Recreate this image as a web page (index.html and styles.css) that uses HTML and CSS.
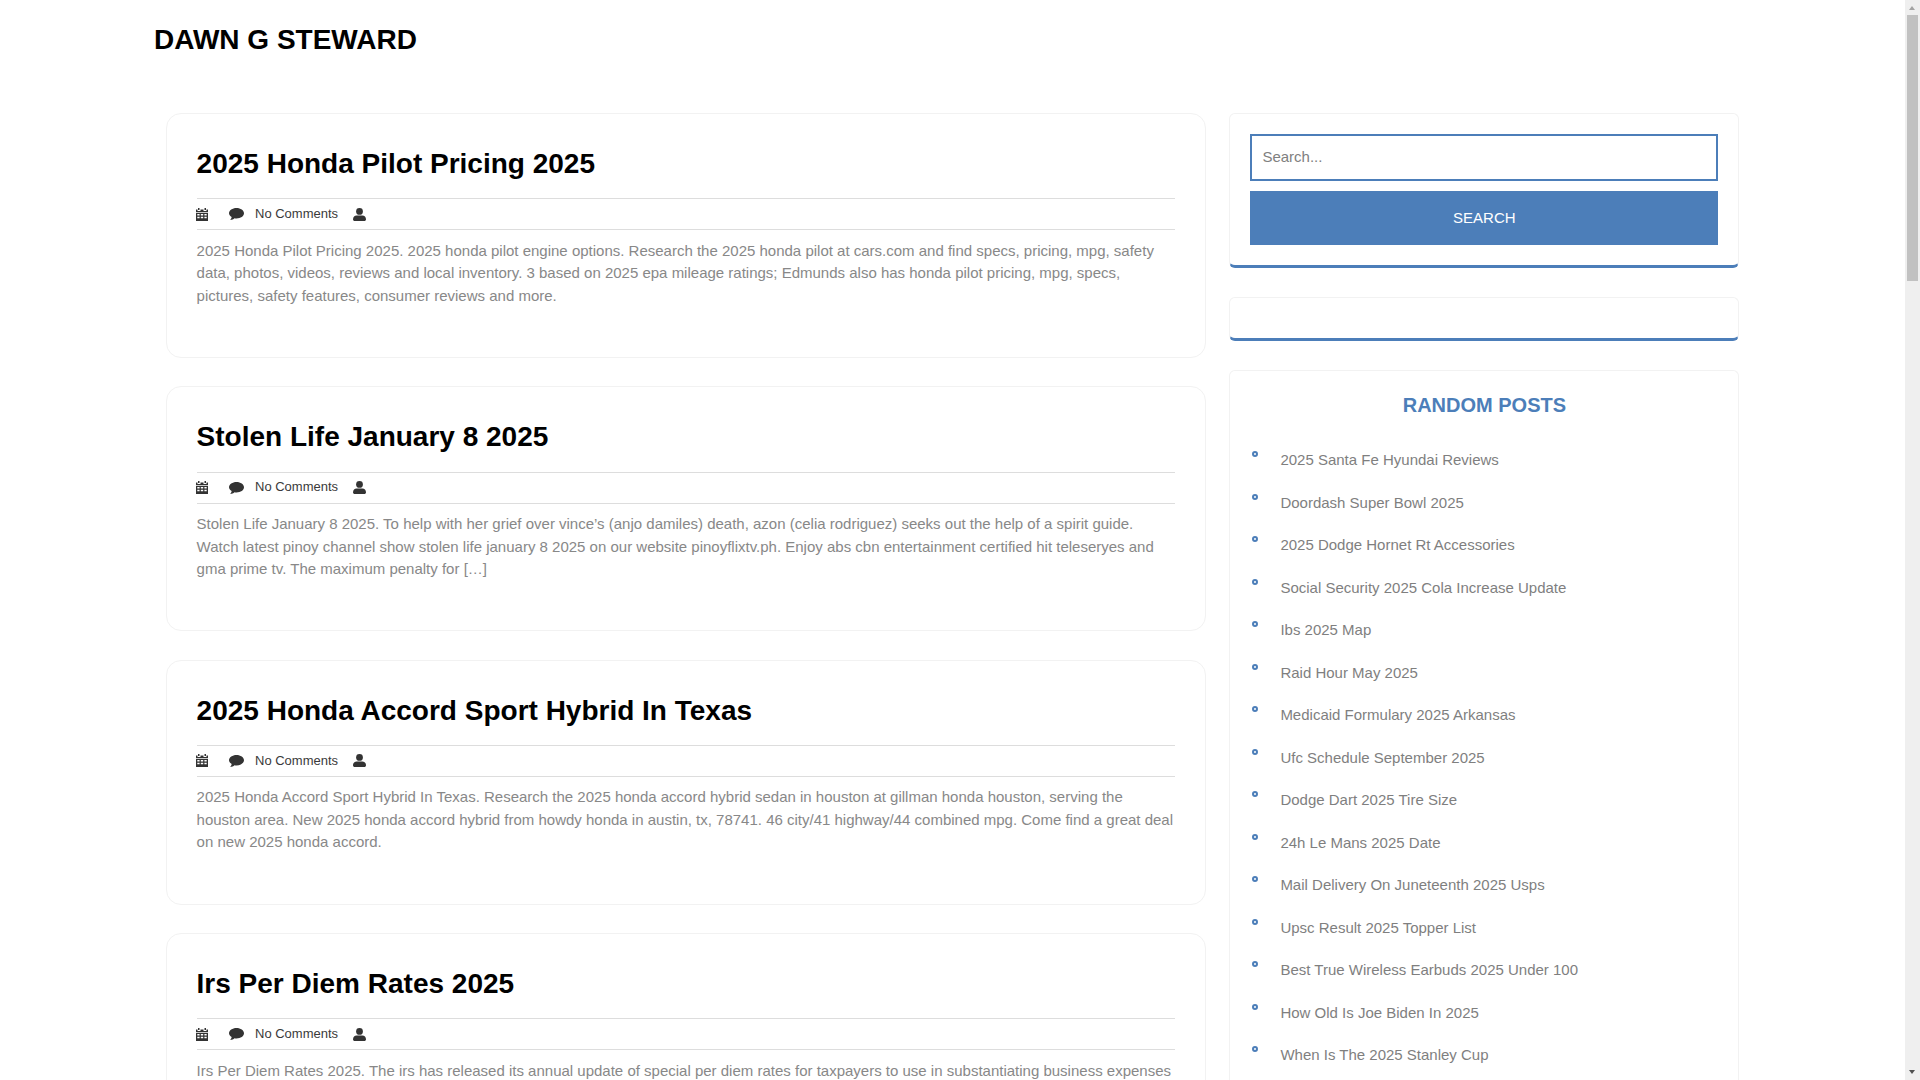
FILE: index.html
```html
<!DOCTYPE html>
<html lang="en">

<head>
    <meta charset="UTF-8">
    <meta name="viewport" content="width=device-width, initial-scale=1.0">
    <title>Dawn G Steward</title>
    <link rel="stylesheet" href="styles.css">
</head>

<body>
    <svg class="icon-defs" width="0" height="0">
        <symbol id="i-cal" viewBox="0 0 12 13">
            <path d="M2 0h1.500v2H2zM8.500 0H10v2H8.500zM0 1.500h1.500v1.500h3V1.500h3v1.500h3V1.500H12V4H0zM0 4.800h12V13H0zM1.300 6v1.500h2.300V6zm3.500 0v1.500h2.400V6zm3.600 0v1.500h2.300V6zM1.300 8.700v1.600h2.300V8.700zm3.500 0v1.600h2.400V8.700zm3.600 0v1.600h2.300V8.700z" fill-rule="evenodd"/>
        </symbol>
        <symbol id="i-comment" viewBox="0 0 15 12">
            <path d="M7.500 0C11.600 0 15 2.300 15 5.200s-3.400 5.200-7.500 5.200c-.7 0-1.400-.1-2-.2C4.500 11.100 3 11.800 1.200 12c.8-.9 1.400-1.900 1.500-3C1 8 0 6.700 0 5.200 0 2.300 3.400 0 7.500 0z"/>
        </symbol>
        <symbol id="i-user" viewBox="0 0 13 13">
            <circle cx="6.500" cy="3.400" r="3.400"/>
            <path d="M0 11.200C0 9 1.600 7.500 3.600 7.500h5.800C11.400 7.500 13 9 13 11.200c0 1.100-.7 1.800-1.800 1.800H1.800C.7 13 0 12.300 0 11.200z"/>
        </symbol>
    </svg>

    <header class="site-header">
        <a class="site-title" href="#">DAWN G STEWARD</a>
    </header>

    <div class="wrapper">
        <main class="posts">
            <article class="post">
                <h2 class="post-title">2025 Honda Pilot Pricing 2025</h2>
                <div class="post-meta">
                    <svg class="ico ico-cal"><use href="#i-cal"/></svg>
                    <svg class="ico ico-comment"><use href="#i-comment"/></svg>
                    <span>No Comments</span>
                    <svg class="ico ico-user"><use href="#i-user"/></svg>
                </div>
                <p class="post-text">2025 Honda Pilot Pricing 2025. 2025 honda pilot engine options. Research the 2025 honda pilot at cars.com and find specs, pricing, mpg, safety data, photos, videos, reviews and local inventory. 3 based on 2025 epa mileage ratings; Edmunds also has honda pilot pricing, mpg, specs, pictures, safety features, consumer reviews and more.</p>
            </article>

            <article class="post">
                <h2 class="post-title">Stolen Life January 8 2025</h2>
                <div class="post-meta">
                    <svg class="ico ico-cal"><use href="#i-cal"/></svg>
                    <svg class="ico ico-comment"><use href="#i-comment"/></svg>
                    <span>No Comments</span>
                    <svg class="ico ico-user"><use href="#i-user"/></svg>
                </div>
                <p class="post-text">Stolen Life January 8 2025. To help with her grief over vince’s (anjo damiles) death, azon (celia rodriguez) seeks out the help of a spirit guide. Watch latest pinoy channel show stolen life january 8 2025 on our website pinoyflixtv.ph. Enjoy abs cbn entertainment certified hit teleseryes and gma prime tv. The maximum penalty for […]</p>
            </article>

            <article class="post">
                <h2 class="post-title">2025 Honda Accord Sport Hybrid In Texas</h2>
                <div class="post-meta">
                    <svg class="ico ico-cal"><use href="#i-cal"/></svg>
                    <svg class="ico ico-comment"><use href="#i-comment"/></svg>
                    <span>No Comments</span>
                    <svg class="ico ico-user"><use href="#i-user"/></svg>
                </div>
                <p class="post-text">2025 Honda Accord Sport Hybrid In Texas. Research the 2025 honda accord hybrid sedan in houston at gillman honda houston, serving the houston area. New 2025 honda accord hybrid from howdy honda in austin, tx, 78741. 46 city/41 highway/44 combined mpg. Come find a great deal on new 2025 honda accord.</p>
            </article>

            <article class="post">
                <h2 class="post-title">Irs Per Diem Rates 2025</h2>
                <div class="post-meta">
                    <svg class="ico ico-cal"><use href="#i-cal"/></svg>
                    <svg class="ico ico-comment"><use href="#i-comment"/></svg>
                    <span>No Comments</span>
                    <svg class="ico ico-user"><use href="#i-user"/></svg>
                </div>
                <p class="post-text">Irs Per Diem Rates 2025. The irs has released its annual update of special per diem rates for taxpayers to use in substantiating business expenses […]</p>
            </article>
        </main>

        <aside class="sidebar">
            <section class="widget">
                <form class="search-form">
                    <input class="search-input" type="text" placeholder="Search...">
                    <button class="search-btn" type="submit">SEARCH</button>
                </form>
            </section>

            <section class="widget widget-empty"></section>

            <section class="widget widget-random">
                <h3 class="widget-title">RANDOM POSTS</h3>
                <ul class="random-list">
                    <li>2025 Santa Fe Hyundai Reviews</li>
                    <li>Doordash Super Bowl 2025</li>
                    <li>2025 Dodge Hornet Rt Accessories</li>
                    <li>Social Security 2025 Cola Increase Update</li>
                    <li>Ibs 2025 Map</li>
                    <li>Raid Hour May 2025</li>
                    <li>Medicaid Formulary 2025 Arkansas</li>
                    <li>Ufc Schedule September 2025</li>
                    <li>Dodge Dart 2025 Tire Size</li>
                    <li>24h Le Mans 2025 Date</li>
                    <li>Mail Delivery On Juneteenth 2025 Usps</li>
                    <li>Upsc Result 2025 Topper List</li>
                    <li>Best True Wireless Earbuds 2025 Under 100</li>
                    <li>How Old Is Joe Biden In 2025</li>
                    <li>When Is The 2025 Stanley Cup</li>
                </ul>
            </section>
        </aside>
    </div>

    <!-- scrollbar of the original window -->
    <div class="scrollbar">
        <span class="scroll-up"></span>
        <span class="scroll-thumb"></span>
        <span class="scroll-down"></span>
    </div>
</body>

</html>
```

FILE: styles.css
```css
* {
    box-sizing: border-box;
}

body {
    font-family: "Liberation Sans", Arial, sans-serif;
    margin: 0;
    background-color: #fff;
    color: #7f7f7f;
    font-size: 15px;
    line-height: 22.5px;
}

.icon-defs {
    display: block;
    height: 0;
}

.site-header {
    height: 113px;
    padding: 22px 0 0 154px;
}

.site-title {
    font-size: 28px;
    font-weight: bold;
    line-height: 36px;
    color: #000;
    text-decoration: none;
}

.wrapper {
    width: 1574px;
    margin-left: 165.600px;
    display: flex;
    gap: 23.400px;
    align-items: flex-start;
}

.posts {
    width: 1040.400px;
}

.post {
    height: 245px;
    margin-bottom: 28.250px;
    padding: 30px 30px 0 30px;
    border: 1px solid #f2f2f2;
    border-radius: 15px;
}

.post-title {
    margin: 0 0 15.400px 0;
    font-size: 28px;
    line-height: 39px;
    color: #000;
}

.post-meta {
    display: flex;
    align-items: center;
    height: 32px;
    border-top: 1px solid #ddd;
    border-bottom: 1px solid #ddd;
    font-size: 13px;
    color: #3a3a3a;
}

.ico {
    fill: #333;
}

.ico-cal {
    width: 12px;
    height: 13px;
    margin-left: -0.600px;
    margin-right: 21px;
}

.ico-comment {
    width: 15px;
    height: 12px;
    margin-right: 11px;
}

.ico-user {
    width: 13px;
    height: 13px;
    margin-left: 14.500px;
}

.post-text {
    margin: 9.550px 0 0 0;
    color: #888;
}

.sidebar {
    width: 510px;
}

.widget {
    margin-bottom: 29px;
    padding: 20px;
    border: 1px solid #f2f2f2;
    border-bottom: 3px solid #4c7eb9;
    border-radius: 6px;
}

.widget-empty {
    height: 44px;
    padding: 0;
}

.search-input {
    display: block;
    width: 100%;
    height: 47px;
    padding: 0 10px 2px 10px;
    border: 2px solid #4c7eb9;
    font-family: inherit;
    font-size: 15px;
    color: #777;
    background: #fff;
    margin-bottom: 10px;
}

.search-input::placeholder {
    color: #808080;
}

.search-btn {
    display: block;
    width: 100%;
    height: 54px;
    padding: 0 0 2px 0;
    border: 0;
    background-color: #4c7eb9;
    color: #fff;
    font-family: inherit;
    font-size: 15px;
}

.widget-random {
    border-bottom: 0;
    margin-bottom: 0;
}

.widget-title {
    margin: 0 0 20px 0;
    text-align: center;
    font-size: 20px;
    line-height: 28px;
    color: #4c7eb9;
}

.random-list {
    list-style: none;
    margin: 0;
    padding: 0;
}

.random-list li {
    position: relative;
    height: 42.500px;
    padding: 10px 0 10px 30px;
}

.random-list li::before {
    content: "";
    position: absolute;
    left: 2.100px;
    top: 12px;
    width: 2px;
    height: 2px;
    border: 2.500px solid #4c7eb9;
    border-radius: 50%;
}

.scrollbar {
    position: fixed;
    top: 0;
    right: 0;
    width: 15px;
    height: 100vh;
    background-color: #efefef;
}

.scroll-thumb {
    position: absolute;
    top: 15px;
    left: 2px;
    width: 11px;
    height: 266px;
    background-color: #c1c1c1;
}

.scroll-up,
.scroll-down {
    position: absolute;
    left: 4px;
    width: 0;
    height: 0;
    border-left: 3.500px solid transparent;
    border-right: 3.500px solid transparent;
}

.scroll-up {
    top: 6px;
    border-bottom: 4px solid #a3a3a3;
}

.scroll-down {
    bottom: 6px;
    border-top: 4px solid #505050;
}
```
